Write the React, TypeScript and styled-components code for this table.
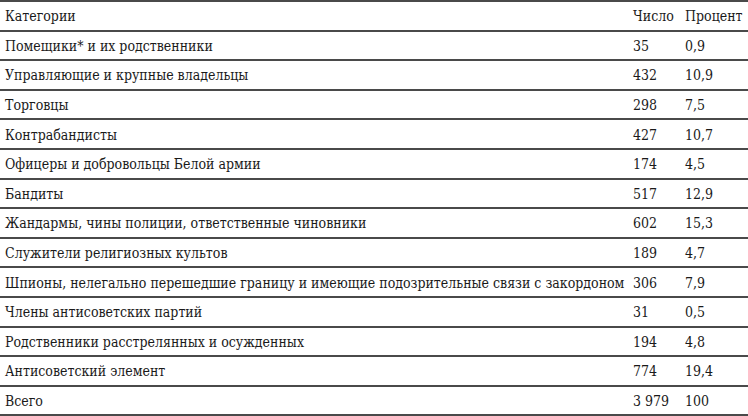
import React from "react";
import styled, { createGlobalStyle } from "styled-components";

const Global = createGlobalStyle`
  html, body { margin: 0; padding: 0; background: #fff; }
  body { font-family: "DejaVu Serif Condensed", "DejaVu Serif", serif; color: #1a1a1a; }
`;

const Table = styled.div`
  width: 748px;
  border-top: 2px solid #4a4a4a;
  display: flex;
  flex-direction: column;
`;

const Row = styled.div`
  display: grid;
  grid-template-columns: 628px 52px 63px;
  padding-left: 5px;
  height: 27.6px;
  border-bottom: 2px solid #4a4a4a;
  align-items: center;
  font-size: 14px;
  line-height: 17px;
`;

const Cell = styled.div`
  white-space: nowrap;
  padding-top: 2px;
`;

const rows: [string, string, string][] = [
  ["Помещики* и их родственники", "35", "0,9"],
  ["Управляющие и крупные владельцы", "432", "10,9"],
  ["Торговцы", "298", "7,5"],
  ["Контрабандисты", "427", "10,7"],
  ["Офицеры и добровольцы Белой армии", "174", "4,5"],
  ["Бандиты", "517", "12,9"],
  ["Жандармы, чины полиции, ответственные чиновники", "602", "15,3"],
  ["Служители религиозных культов", "189", "4,7"],
  ["Шпионы, нелегально перешедшие границу и имеющие подозрительные связи с закордоном", "306", "7,9"],
  ["Члены антисоветских партий", "31", "0,5"],
  ["Родственники расстрелянных и осужденных", "194", "4,8"],
  ["Антисоветский элемент", "774", "19,4"],
  ["Всего", "3 979", "100"],
];

export default function App() {
  return (
    <>
      <Global />
      <Table>
        <Row>
          <Cell>Категории</Cell>
          <Cell>Число</Cell>
          <Cell>Процент</Cell>
        </Row>
        {rows.map((r) => (
          <Row key={r[0]}>
            <Cell>{r[0]}</Cell>
            <Cell>{r[1]}</Cell>
            <Cell>{r[2]}</Cell>
          </Row>
        ))}
      </Table>
    </>
  );
}
